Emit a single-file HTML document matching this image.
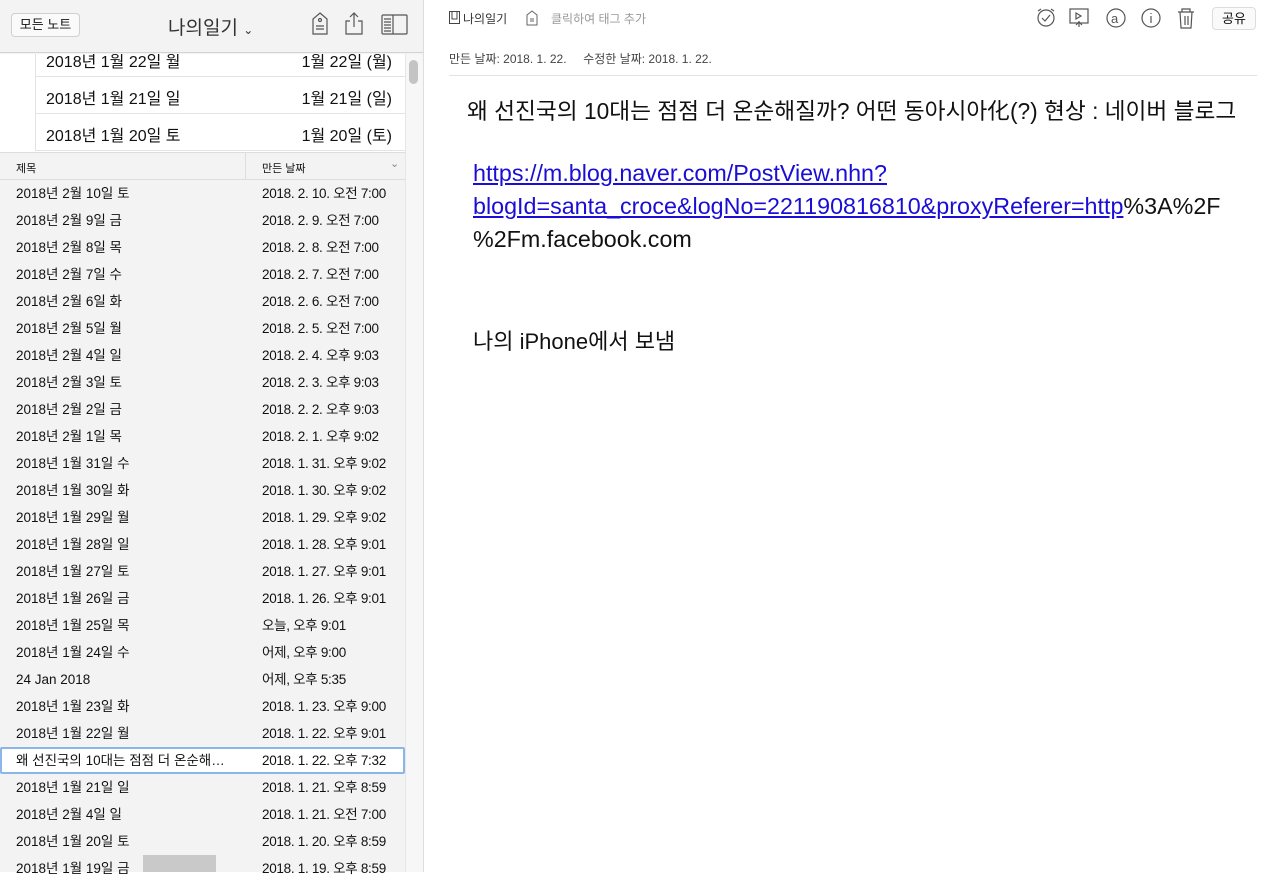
<!DOCTYPE html>
<html><head><meta charset="utf-8"><style>
*{margin:0;padding:0;box-sizing:border-box}
body{width:1280px;height:872px;overflow:hidden;background:#fff;font-family:"Liberation Sans","Noto Sans CJK KR",sans-serif;color:#111;position:relative}
#left{position:absolute;left:0;top:0;width:424px;height:872px;background:#f3f3f3;border-right:1px solid #ddd}
#tb{position:absolute;left:0;top:0;width:423px;height:53px;background:#f3f3f3;border-bottom:1px solid #d3d3d3}
.btn{position:absolute;left:11px;top:13px;width:69px;height:24px;border:1px solid #d0d0d0;border-radius:4px;background:#fafafa;font-size:13px;text-align:center;line-height:22px}
#title{position:absolute;left:168px;top:13px;font-size:19px;color:#333}
#cal{position:absolute;left:0;top:54px;width:405px;height:98px;background:#fff;overflow:hidden}
.cr{position:absolute;left:35px;width:370px;height:37px;border-left:1px solid #e3e3e3;border-bottom:1px solid #e3e3e3;font-size:16px}
.cr span{position:absolute;top:8px}
#sb{position:absolute;left:405px;top:54px;width:18px;height:818px;background:#f7f7f7;border-left:1px solid #e6e6e6}
#thumb{position:absolute;left:409px;top:60px;width:9px;height:24px;border-radius:5px;background:#c4c4c4}
#hdr{position:absolute;left:0;top:152px;width:405px;height:28px;background:#f3f3f3;border-top:1px solid #ddd;border-bottom:1px solid #ddd;font-size:11px}
.row{position:absolute;left:0;width:405px;height:27px;font-size:13.5px;line-height:27px}
.row .a{position:absolute;left:16px}
.row .b{position:absolute;left:262px;letter-spacing:-0.3px}
#right{position:absolute;left:425px;top:0;width:855px;height:872px}
a{color:#1a0dd6}
</style></head><body>
<div id="left">
<div id="tb">
<div class="btn">모든 노트</div>
<div id="title">나의일기 <span style="font-size:12px">⌄</span></div>
<svg style="position:absolute;left:310px;top:12px" width="20" height="24" viewBox="0 0 20 24" fill="none" stroke="#555" stroke-width="1.2"><path d="M10 1 L17 7 V22 H3 V7 Z"/><circle cx="10" cy="8" r="1.5"/><path d="M6 14h8M6 17h8"/></svg>
<svg style="position:absolute;left:344px;top:11px" width="20" height="24" viewBox="0 0 20 24" fill="none" stroke="#555" stroke-width="1.2"><path d="M10 2v14M6 6l4-4 4 4M6 10H2v13h16V10h-4"/></svg>
<svg style="position:absolute;left:381px;top:14px" width="27" height="21" viewBox="0 0 27 21" fill="none" stroke="#555" stroke-width="1.2"><rect x="1" y="1" width="25" height="19" rx="1"/><path d="M12 1v19M3 5h7M3 8h7M3 11h7M3 14h7M3 17h7"/></svg>
</div>
<div id="cal">
<div class="cr" style="top:-14px"><span style="left:10px">2018년 1월 22일 월</span><span style="right:13px">1월 22일 (월)</span></div>
<div class="cr" style="top:23px"><span style="left:10px">2018년 1월 21일 일</span><span style="right:13px">1월 21일 (일)</span></div>
<div class="cr" style="top:60px"><span style="left:10px">2018년 1월 20일 토</span><span style="right:13px">1월 20일 (토)</span></div>
</div>
<div id="sb"></div><div id="thumb"></div>
<div id="hdr"><span style="position:absolute;left:16px;top:7px">제목</span><span style="position:absolute;left:245px;top:0;height:27px;border-left:1px solid #ddd"></span><span style="position:absolute;left:262px;top:7px">만든 날짜</span><span style="position:absolute;left:390px;top:4px;color:#888">⌄</span></div>
<div id="rows"></div>
</div>
<div id="right">
<svg style="position:absolute;left:24px;top:11px" width="11" height="13" viewBox="0 0 11 13" fill="none" stroke="#444"><rect x="0.5" y="0.5" width="10" height="12"/><path d="M3 1v7h5V1"/></svg>
<div style="position:absolute;left:38px;top:10px;font-size:12px;color:#333">나의일기</div>
<svg style="position:absolute;left:101px;top:10px" width="12" height="16" viewBox="0 0 12 16" fill="none" stroke="#666"><path d="M6 1l5 4v10H1V5z"/><path d="M4 9h4M4 11h4"/></svg>
<div style="position:absolute;left:126px;top:10px;font-size:12px;color:#999">클릭하여 태그 추가</div>
<svg style="position:absolute;left:610px;top:7px" width="180" height="22" viewBox="0 0 180 22" fill="none" stroke="#555" stroke-width="1.2">
<circle cx="11" cy="11" r="8"/><path d="M7 11l3 3 5-6M3 4l3-2M19 4l-3-2"/>
<rect x="35" y="2" width="18" height="14"/><path d="M41 6v6l5-3z M44 14l0 6M41 18l3-3 3 3"/>
<circle cx="81" cy="11" r="9"/><text x="76" y="16" font-size="13" fill="#555" stroke="none" font-family="Liberation Sans">a</text>
<circle cx="116" cy="11" r="9"/><path d="M116 9v7M116 6v1"/>
<path d="M143 5h16M147 5V2h8v3M145 5l1 16h10l1-16M150 9v9M153 9v9"/>
</svg>
<div style="position:absolute;left:787px;top:7px;width:44px;height:23px;border:1px solid #ddd;border-radius:4px;background:#fafafa;font-size:13px;text-align:center;line-height:21px">공유</div>
<div style="position:absolute;left:24px;top:50px;font-size:12px;color:#444">만든 날짜: 2018. 1. 22.&nbsp;&nbsp;&nbsp;&nbsp;&nbsp;수정한 날짜: 2018. 1. 22.</div>
<div style="position:absolute;left:24px;top:75px;width:808px;border-top:1px solid #e3e3e3"></div>
<div style="position:absolute;left:42px;top:93px;font-size:22.7px;white-space:nowrap">왜 선진국의 10대는 점점 더 온순해질까? 어떤 동아시아化(?) 현상 : 네이버 블로그</div>
<div style="position:absolute;left:48px;top:157px;width:810px;font-size:23.3px;line-height:33px;white-space:nowrap"><a href="#">https://m.blog.naver.com/PostView.nhn?<br>blogId=santa_croce&amp;logNo=221190816810&amp;proxyReferer=http</a>%3A%2F<br>%2Fm.facebook.com</div>
<div style="position:absolute;left:48px;top:324px;font-size:22px">나의 iPhone에서 보냄</div>
</div>
<script>
var d=[["2018년 2월 10일 토","2018. 2. 10. 오전 7:00"],["2018년 2월 9일 금","2018. 2. 9. 오전 7:00"],["2018년 2월 8일 목","2018. 2. 8. 오전 7:00"],["2018년 2월 7일 수","2018. 2. 7. 오전 7:00"],["2018년 2월 6일 화","2018. 2. 6. 오전 7:00"],["2018년 2월 5일 월","2018. 2. 5. 오전 7:00"],["2018년 2월 4일 일","2018. 2. 4. 오후 9:03"],["2018년 2월 3일 토","2018. 2. 3. 오후 9:03"],["2018년 2월 2일 금","2018. 2. 2. 오후 9:03"],["2018년 2월 1일 목","2018. 2. 1. 오후 9:02"],["2018년 1월 31일 수","2018. 1. 31. 오후 9:02"],["2018년 1월 30일 화","2018. 1. 30. 오후 9:02"],["2018년 1월 29일 월","2018. 1. 29. 오후 9:02"],["2018년 1월 28일 일","2018. 1. 28. 오후 9:01"],["2018년 1월 27일 토","2018. 1. 27. 오후 9:01"],["2018년 1월 26일 금","2018. 1. 26. 오후 9:01"],["2018년 1월 25일 목","오늘, 오후 9:01"],["2018년 1월 24일 수","어제, 오후 9:00"],["24 Jan 2018","어제, 오후 5:35"],["2018년 1월 23일 화","2018. 1. 23. 오후 9:00"],["2018년 1월 22일 월","2018. 1. 22. 오후 9:01"],["왜 선진국의 10대는 점점 더 온순해…","2018. 1. 22. 오후 7:32"],["2018년 1월 21일 일","2018. 1. 21. 오후 8:59"],["2018년 2월 4일 일","2018. 1. 21. 오전 7:00"],["2018년 1월 20일 토","2018. 1. 20. 오후 8:59"],["2018년 1월 19일 금","2018. 1. 19. 오후 8:59"]];
var h="";d.forEach(function(r,i){var s=i==21?"background:#fff;box-shadow:inset 0 0 0 2px #8ab7ea;border-radius:2px;":"";h+='<div class="row" style="top:'+(180+i*27)+'px;'+s+'"><span class="a">'+r[0]+'</span><span class="b">'+r[1]+'</span></div>';});
h+='<div style="position:absolute;left:143px;top:855px;width:73px;height:17px;background:#c9c9c9"></div>';
document.getElementById("rows").innerHTML=h;
</script>
</body></html>
